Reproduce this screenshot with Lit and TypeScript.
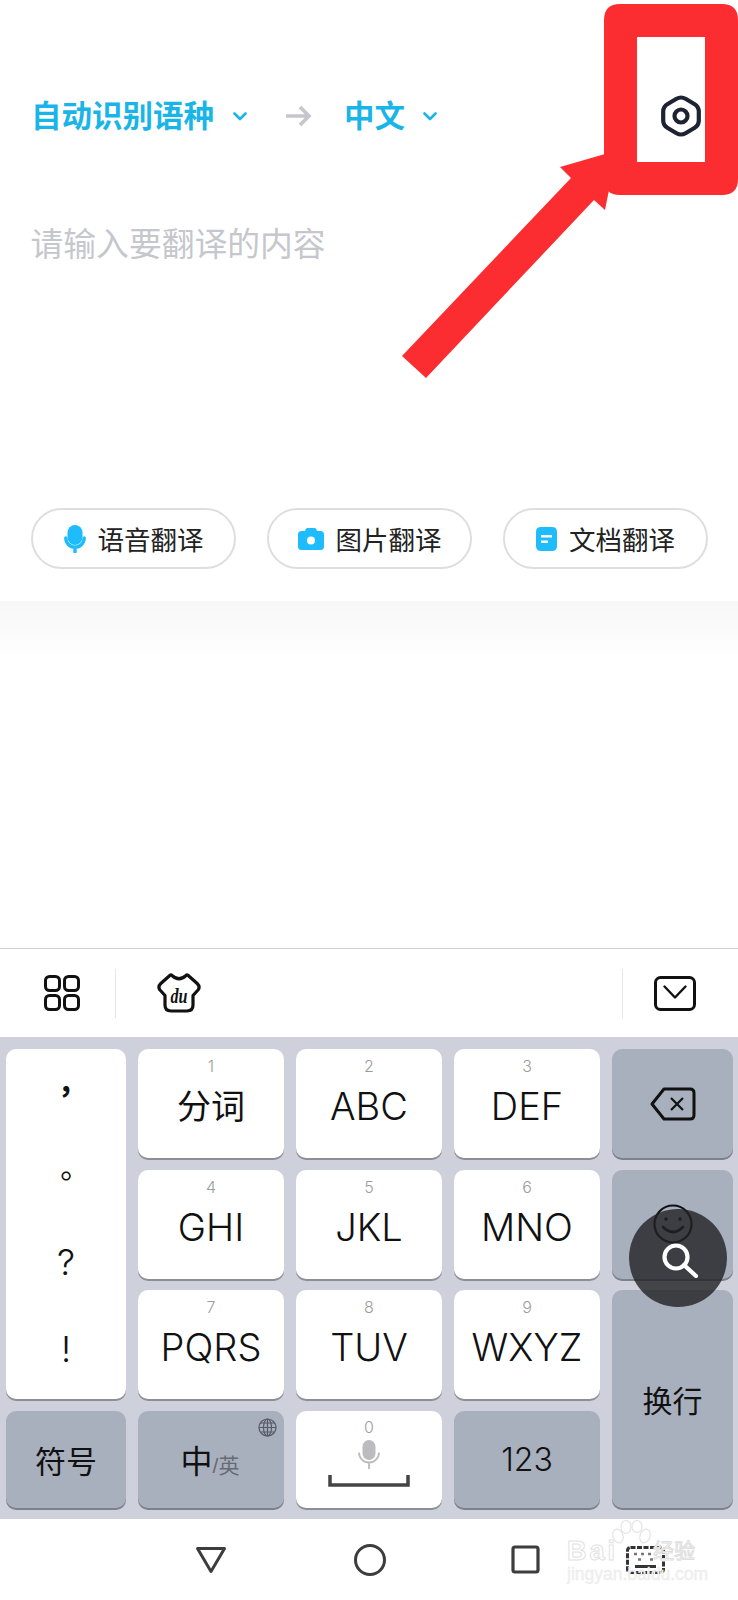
import { LitElement, html, css } from "lit";
import { customElement } from "lit/decorators.js";

const chevron = html`<svg width="14" height="9" viewBox="0 0 14 9"><path d="M1.5 1.5 7 7l5.5-5.5" fill="none" stroke="#1ab5e8" stroke-width="2.6" stroke-linecap="round" stroke-linejoin="round"/></svg>`;

@customElement("app-root")
export class AppRoot extends LitElement {
  static styles = css`
    :host { display: block; width: 738px; height: 1600px; background: #fff; }
  `;
  render() { return html`<translator-screen></translator-screen>`; }
}

@customElement("translator-screen")
export class TranslatorScreen extends LitElement {
  static styles = css`
    :host {
      display: flex; flex-direction: column; position: relative; width: 738px; height: 1600px;
      background: #fff; overflow: hidden; color: #111;
      font-family: "Liberation Sans", "Noto Sans CJK SC", sans-serif;
    }
    .top { height: 601px; display: flex; flex-direction: column; box-sizing: border-box; padding-bottom: 32px; flex: none; }
    .header { display: flex; align-items: center; height: 48px; margin-top: 92px; padding: 0 36px 0 31px; }
    .lang { font-size: 30.5px; line-height: 48px; font-weight: 700; color: #1ab5e8; }
    .chev1 { margin-left: 19px; display: flex; }
    .arrow { margin-left: 38px; display: flex; }
    .lang2 { margin-left: 32px; }
    .chev2 { margin-left: 18px; display: flex; }
    .gear { margin-left: auto; display: flex; }
    .placeholder { margin: 85px 0 0 30.5px; font-size: 32.8px; line-height: 40px; color: #c5c7cc; font-weight: 400; }
    .chips { margin-top: auto; display: flex; gap: 31px; padding-left: 31px; }
    .chip {
      width: 205px; height: 61px; box-sizing: border-box; border: 2px solid #dedede; border-radius: 31px;
      display: flex; align-items: center; justify-content: center; gap: 12px;
      font-size: 26.5px; color: #222;
    }
    .fade { flex: 1; background: linear-gradient(#f7f7f7, #fff 60px); }
    .toolbar { flex: none; height: 89px; box-sizing: border-box; border-top: 1px solid #cfcfcf; display: flex; align-items: center; }
    .toolbar .grid-ic { margin-left: 44px; display: flex; }
    .vline { width: 1px; height: 49px; background: #e6e6e6; }
    .v1 { margin-left: 35px; }
    .shirt { margin-left: 41px; display: flex; }
    .v2 { margin-left: auto; }
    .box-ic { margin-left: 31px; margin-right: 42px; display: flex; }
    .keyboard {
      flex: none; height: 482px; box-sizing: border-box; background: #ced1dc; padding: 12px 5px 10px 6px;
      display: grid; grid-template-columns: 120px 146px 146px 146px 121px; column-gap: 12px;
      grid-template-rows: 109px 109px 109px 97px; row-gap: 11.67px;
    }
    .key {
      background: #fff; border-radius: 10px; box-shadow: 0 2px 0 #8e8f94;
      display: flex; flex-direction: column; align-items: center; justify-content: center; min-width: 0;
      position: relative;
    }
    .key.dark { background: #a9b0bd; box-shadow: 0 2px 0 #7d818b; }
    .key.num { justify-content: flex-start; padding-top: 8px; box-sizing: border-box; }
    .digit { font-family: Inter, "Liberation Sans", sans-serif; font-weight: 300; font-size: 16px; line-height: 18px; color: #9c9c9c; }
    .label { font-family: Inter, "Noto Sans CJK SC", sans-serif; font-weight: 300; font-size: 38px; line-height: 44px; margin-top: 9px; color: #111; }
    .label.cjk { font-family: "Noto Sans CJK SC", sans-serif; font-weight: 400; font-size: 34px; margin-top: 8px; }
    .punct { grid-row: 1 / span 3; display: grid; grid-template-rows: 79px 91px 86px 88px; align-content: start; justify-content: stretch; }
    .punct span { display: flex; align-items: center; justify-content: center; font-size: 30px; font-family: "Noto Sans CJK TC", sans-serif; color: #111; }
    .punct span.comma { font-weight: 700; }
    .punct span.latin { font-size: 36px; font-weight: 300; font-family: Inter, "Liberation Sans", sans-serif; }
    .enter { grid-column: 5; grid-row: 3 / span 2; font-size: 30px; }
    .txt { font-size: 31px; }
    .n123 { font-size: 32px; font-family: Inter, "Liberation Sans", sans-serif; font-weight: 300; }
    .zh { display: flex; align-items: baseline; font-size: 32px; margin-left: -2px; }
    .zh small { font-size: 21px; color: #666b74; }
    .globe { position: absolute; right: 7px; top: 7px; display: flex; }
    .space { justify-content: flex-start; padding-top: 7px; box-sizing: border-box; }
    .mic0 { margin-top: 4px; display: flex; }
    .bracket { margin-top: 6px; display: flex; }
    .nav { flex: none; height: 81px; display: flex; align-items: center; padding-left: 195px; }
    .nav svg { display: block; }
    .nav .c { margin-left: 127px; }
    .nav .s { margin-left: 125px; }
    .nav .k { margin-left: 86px; }
    .annot { position: absolute; left: 0; top: 0; pointer-events: none; }
    .bubble {
      position: absolute; left: 629px; top: 1209px; width: 98px; height: 98px; border-radius: 50%;
      background: rgba(34, 34, 36, 0.8); display: flex; align-items: center; justify-content: center;
    }
    .wm { position: absolute; left: 567px; top: 1520px; width: 135px; height: 66px; pointer-events: none; }
    .wm-top { position: absolute; left: 0; top: 16px; display: flex; align-items: center; }
    .bai { font-size: 27px; line-height: 30px; letter-spacing: 3px; font-weight: 700; color: #fff; -webkit-text-stroke: 1px #e2e2e2; }
    .jy { position: absolute; left: 86px; top: 0; font-size: 21px; line-height: 30px; color: #fff; -webkit-text-stroke: 1px #dedede; white-space: nowrap; }
    .url { position: absolute; left: 0; top: 44px; font-size: 17.5px; line-height: 20px; color: #f1f1f1; -webkit-text-stroke: .3px #e8e8e8; white-space: nowrap; }
    .paw { position: absolute; left: 43px; top: 0; }
  `;

  private numKey(d: string, t: string, cjk = false) {
    return html`<div class="key num"><span class="digit">${d}</span><span class="label ${cjk ? "cjk" : ""}">${t}</span></div>`;
  }

  render() {
    return html`
      <div class="top">
        <div class="header">
          <span class="lang">自动识别语种</span>
          <span class="chev1">${chevron}</span>
          <span class="arrow"><svg width="27" height="22" viewBox="0 0 27 22"><path d="M1 11h23M15 2l9 9-9 9" fill="none" stroke="#c5c5cc" stroke-width="3.6"/></svg></span>
          <span class="lang lang2">中文</span>
          <span class="chev2">${chevron}</span>
          <span class="gear"><svg width="42" height="42" viewBox="0 0 42 42" fill="none" stroke="#1d2333" stroke-width="4.200" stroke-linejoin="round"><path d="M16.500 3.800q4.500-2.600 9 0l8.800 5.200q4.500 2.600 4.500 7.500v9q0 4.900-4.500 7.500l-8.800 5.200q-4.500 2.600-9 0L7.700 33Q3.200 30.400 3.200 25.500v-9Q3.200 11.600 7.700 9z"/><circle cx="21" cy="21" r="6.500"/></svg></span>
        </div>
        <div class="placeholder">请输入要翻译的内容</div>
        <div class="chips">
          <div class="chip">
            <svg width="22" height="28" viewBox="0 0 22 28"><rect x="3.500" y="0" width="15" height="20" rx="7.500" fill="#1ebcfc"/><path d="M1.800 13a9.200 9.200 0 0 0 18.400 0M11 22v5" fill="none" stroke="#1ebcfc" stroke-width="3.400" stroke-linecap="round"/></svg>
            语音翻译
          </div>
          <div class="chip">
            <svg width="26" height="22" viewBox="0 0 26 22"><path fill="#1ebcfc" fill-rule="evenodd" d="M9.500 0h7q1.500 0 2 1.500L19 3h3.500Q26 3 26 6.500v12q0 3.500-3.500 3.500h-19Q0 22 0 18.500v-12Q0 3 3.500 3H7l.5-1.500Q8 0 9.500 0zM13 8.500a4 4 0 1 0 0 8 4 4 0 0 0 0-8z"/></svg>
            图片翻译
          </div>
          <div class="chip">
            <svg width="21" height="24" viewBox="0 0 21 24"><path fill="#1ebcfc" fill-rule="evenodd" d="M5 0h11q5 0 5 5v14q0 5-5 5H5q-5 0-5-5V5q0-5 5-5zM5 8v2.600h11V8zM5 13.500v2.600h7v-2.600z"/></svg>
            文档翻译
          </div>
        </div>
      </div>
      <div class="fade"></div>
      <div class="toolbar">
        <span class="grid-ic"><svg width="36" height="36" viewBox="0 0 36 36" fill="none" stroke="#111" stroke-width="3"><rect x="1.500" y="1.500" width="14" height="14" rx="4"/><rect x="20.500" y="1.500" width="14" height="14" rx="4"/><rect x="1.500" y="20.500" width="14" height="14" rx="4"/><rect x="20.500" y="20.500" width="14" height="14" rx="4"/></svg></span>
        <span class="vline v1"></span>
        <span class="shirt"><svg width="44" height="42" viewBox="-1 -1 44 42"><path d="M14 2.500q7 6.500 14 0 1-1 2.200 0l9 8q3.300 3.300.8 6.500L35 22.500V32q0 6-6 6H13q-6 0-6-6v-9.500L2 17q-2.500-3.200.8-6.500l9-8q1.200-1 2.200 0z" fill="none" stroke="#111" stroke-width="3.200" stroke-linejoin="round"/><text x="21" y="30" text-anchor="middle" font-family="Liberation Serif, serif" font-style="italic" font-weight="700" font-size="22" textLength="17" lengthAdjust="spacingAndGlyphs" fill="#111">du</text></svg></span>
        <span class="vline v2"></span>
        <span class="box-ic"><svg width="42" height="35" viewBox="0 0 42 35" fill="none" stroke="#111" stroke-width="3"><rect x="1.500" y="1.500" width="39" height="32" rx="5"/><path d="M10.500 10.500 21 21.500 31.500 10.500" stroke-linecap="round" stroke-linejoin="round" stroke-width="2.400"/></svg></span>
      </div>
      <div class="keyboard">
        <div class="key punct"><span class="comma">，</span><span>。</span><span class="latin">?</span><span class="latin">!</span></div>
        ${this.numKey("1", "分词", true)}
        ${this.numKey("2", "ABC")}
        ${this.numKey("3", "DEF")}
        <div class="key dark"><svg width="46" height="34" viewBox="0 0 46 34" fill="none" stroke="#111" stroke-width="3" stroke-linejoin="round"><path d="M14 2h26q4 0 4 4v22q0 4-4 4H14L2 17z"/><path d="M21 11l12 12M33 11 21 23" stroke-width="2.200"/></svg></div>
        ${this.numKey("4", "GHI")}
        ${this.numKey("5", "JKL")}
        ${this.numKey("6", "MNO")}
        <div class="key dark"><svg width="40" height="40" viewBox="0 0 40 40" fill="none" stroke="#111" stroke-width="2.200"><circle cx="20" cy="20" r="18.500"/><circle cx="13" cy="15" r="1.800" fill="#111" stroke="none"/><circle cx="27" cy="15" r="1.800" fill="#111" stroke="none"/><path d="M10 23q10 10 20 0" stroke-linecap="round" stroke-width="2.600"/></svg></div>
        ${this.numKey("7", "PQRS")}
        ${this.numKey("8", "TUV")}
        ${this.numKey("9", "WXYZ")}
        <div class="key dark enter">换行</div>
        <div class="key dark txt">符号</div>
        <div class="key dark">
          <span class="zh">中<small>/英</small></span>
          <span class="globe"><svg width="19" height="19" viewBox="0 0 19 19" fill="none" stroke="#555b66" stroke-width="1.200"><circle cx="9.500" cy="9.500" r="8.500"/><ellipse cx="9.500" cy="9.500" rx="4" ry="8.500"/><path d="M9.500 1v17M1 9.500h17M2.300 5h14.400M2.300 14h14.400"/></svg></span>
        </div>
        <div class="key space">
          <span class="digit">0</span>
          <span class="mic0"><svg width="22" height="29" viewBox="0 0 22 29"><rect x="4.500" y="0" width="13" height="20" rx="6.500" fill="#bcbcbf"/><path d="M1 12.500a10 10 0 0 0 20 0M11 23v6" fill="none" stroke="#bcbcbf" stroke-width="1.800"/></svg></span>
          <span class="bracket"><svg width="82" height="12" viewBox="0 0 82 12" fill="none" stroke="#444" stroke-width="3.500"><path d="M2 0v10h78V0"/></svg></span>
        </div>
        <div class="key dark n123">123</div>
      </div>
      <div class="nav">
        <svg class="t" width="32" height="28" viewBox="0 0 32 28"><path d="M2.500 2.500h27L16 25.500z" fill="none" stroke="#3d3d3d" stroke-width="3" stroke-linejoin="round"/></svg>
        <svg class="c" width="32" height="32" viewBox="0 0 32 32"><circle cx="16" cy="16" r="14.500" fill="none" stroke="#3d3d3d" stroke-width="3"/></svg>
        <svg class="s" width="29" height="29" viewBox="0 0 29 29"><rect x="2" y="2" width="25" height="25" rx="2" fill="none" stroke="#3d3d3d" stroke-width="3.200"/></svg>
        <svg class="k" width="39" height="28" viewBox="0 0 39 28" fill="none"><rect x="1.500" y="1.500" width="36" height="25" rx="3" stroke="#333" stroke-width="3" stroke-dasharray="5 1.500"/><path d="M9 20.500h21" stroke="#333" stroke-width="3"/><path d="M8 8h3M15 8h3M22 8h3M28 8h3M12 13.500h3M24 13.500h3" stroke="#777" stroke-width="2.400"/></svg>
      </div>
      <div class="wm">
        <div class="wm-top"><span class="bai">Bai</span><span class="jy">经验</span></div>
        <svg class="paw" width="42" height="30" viewBox="0 0 42 30" fill="#fff" stroke="#e4e4e4" stroke-width="1.200"><ellipse cx="8" cy="16" rx="5" ry="7" transform="rotate(-20 8 16)"/><ellipse cx="16" cy="7" rx="5" ry="6.500"/><ellipse cx="27" cy="6.500" rx="5" ry="6"/><ellipse cx="35" cy="16" rx="5" ry="7" transform="rotate(20 35 16)"/></svg>
        <div class="url">jingyan.baidu.com</div>
      </div>
      <svg class="annot" width="738" height="400" viewBox="0 0 738 400">
        <path fill="#fb2d30" fill-rule="evenodd" d="M620 4h102q16 0 16 16v159q0 16-16 16H620q-16 0-16-16V20q0-16 16-16zM637 37v125h68V37z"/>
        <path fill="#fb2d30" d="M402 356l24 22L594 200l11 10 6-30-6-26-45 13 11 11z"/>
      </svg>
      <div class="bubble"><svg width="40" height="40" viewBox="0 0 40 40" fill="none" stroke="#fff"><circle cx="18" cy="19" r="11.500" stroke-width="4.200"/><path d="M26 27l12 11" stroke-width="4.200" stroke-linecap="round"/></svg></div>
    `;
  }
}
